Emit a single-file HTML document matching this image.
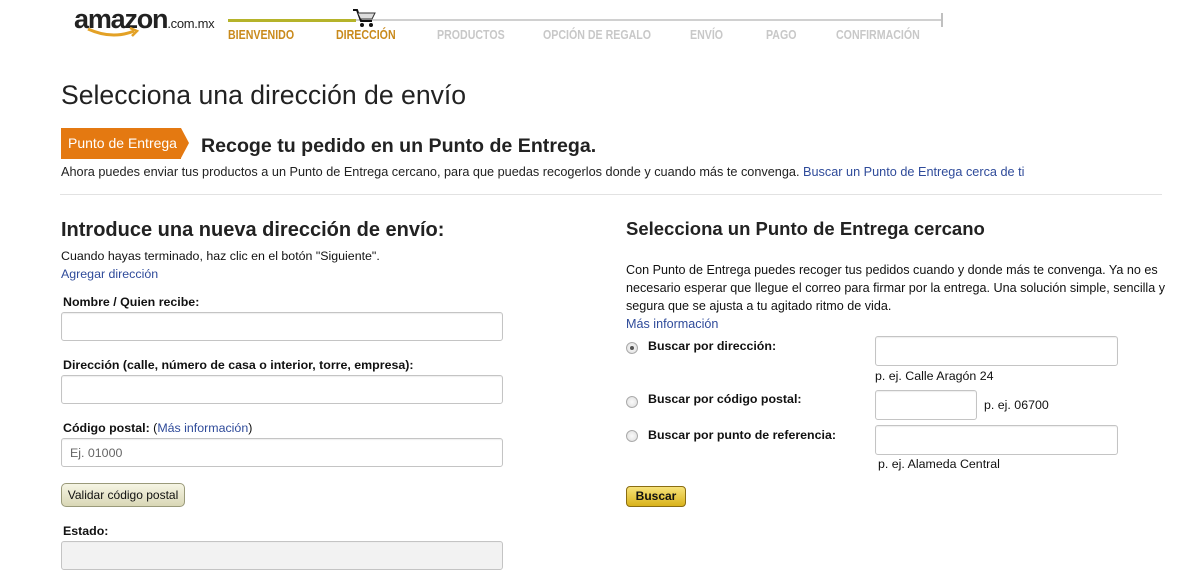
<!DOCTYPE html>
<html><head><meta charset="utf-8"><style>
*{margin:0;padding:0;box-sizing:border-box}
body{width:1200px;height:556px;overflow:hidden;background:#fff;font-family:"Liberation Sans",Arial,sans-serif;color:#111;position:relative;font-size:12.4px}
.a{position:absolute;white-space:nowrap}
.lnk{color:#2f4b9a}
.inp{position:absolute;border:1px solid #c4c4c4;border-radius:3px;background:#fff;box-shadow:inset 0 1px 1px #eee}
.b{font-weight:bold}
.step{position:absolute;top:28px;font-size:12.5px;font-weight:bold;color:#c8c8c8;transform:scaleX(0.85);transform-origin:left;font-family:"Liberation Sans Narrow","Liberation Sans",sans-serif}
.radio{position:absolute;width:12px;height:12px;border-radius:50%;border:1px solid #aaa;background:radial-gradient(#fafafa,#ddd)}
</style></head><body>
<div class="a" style="left:74px;top:4px;font-size:27px;font-weight:bold;letter-spacing:-1.2px;color:#222">amazon<span style="font-size:13px;font-weight:normal;letter-spacing:-0.3px">.com.mx</span></div>
<svg class="a" style="left:86px;top:26px" width="56" height="14"><path d="M2 3 Q26 14 48 5" stroke="#e3a126" stroke-width="3" fill="none"/><path d="M44 2 L51 5 L46 10" stroke="#e3a126" stroke-width="2.5" fill="none"/></svg>
<div class="a" style="left:228px;top:19px;width:128px;height:3px;background:#b5b32a"></div>
<div class="a" style="left:356px;top:19px;width:586px;height:2px;background:#d0d0d0"></div>
<div class="a" style="left:941px;top:13px;width:2px;height:14px;background:#c0c0c0"></div>
<svg class="a" style="left:352px;top:8px" width="26" height="20"><path d="M1 2 H5 L9 13 H20" stroke="#111" stroke-width="2" fill="none"/><path d="M6 5 H23 L20 11 H9" stroke="#333" stroke-width="1" fill="#ddd"/><circle cx="10" cy="17" r="2" fill="#111"/><circle cx="19" cy="17" r="2" fill="#111"/></svg>
<div class="step" style="left:228px;color:#c98a1c">BIENVENIDO</div>
<div class="step" style="left:336px;color:#c98a1c">DIRECCIÓN</div>
<div class="step" style="left:437px">PRODUCTOS</div>
<div class="step" style="left:543px">OPCIÓN DE REGALO</div>
<div class="step" style="left:690px">ENVÍO</div>
<div class="step" style="left:766px">PAGO</div>
<div class="step" style="left:836px">CONFIRMACIÓN</div>

<div class="a" style="left:61px;top:80px;font-size:26.6px;color:#222">Selecciona una dirección de envío</div>
<div class="a" style="left:61px;top:128px;width:120px;height:31px;background:#e47911;color:#fff;font-size:14px;line-height:31px;padding-left:7px">Punto de Entrega</div>
<div class="a" style="left:181px;top:128px;width:0;height:0;border-top:15.5px solid transparent;border-bottom:15.5px solid transparent;border-left:8px solid #e47911"></div>
<div class="a b" style="left:201px;top:135px;font-size:19.6px;color:#222">Recoge tu pedido en un Punto de Entrega.</div>
<div class="a" style="left:61px;top:165px;font-size:12.7px;color:#222">Ahora puedes enviar tus productos a un Punto de Entrega cercano, para que puedas recogerlos donde y cuando más te convenga. <span class="lnk">Buscar un Punto de Entrega cerca de ti</span></div>
<div class="a" style="left:60px;top:194px;width:1102px;height:1px;background:#e2e2e2"></div>

<div class="a b" style="left:61px;top:219px;font-size:20px;color:#222">Introduce una nueva dirección de envío:</div>
<div class="a" style="left:61px;top:249px">Cuando hayas terminado, haz clic en el botón "Siguiente".</div>
<div class="a lnk" style="left:61px;top:267px">Agregar dirección</div>
<div class="a b" style="left:63px;top:295px">Nombre / Quien recibe:</div>
<div class="inp" style="left:61px;top:312px;width:442px;height:29px"></div>
<div class="a b" style="left:63px;top:358px">Dirección (calle, número de casa o interior, torre, empresa):</div>
<div class="inp" style="left:61px;top:375px;width:442px;height:29px"></div>
<div class="a" style="left:63px;top:421px"><b>Código postal:</b> (<span class="lnk">Más información</span>)</div>
<div class="inp" style="left:61px;top:438px;width:442px;height:29px;color:#666;padding:7px 8px">Ej. 01000</div>
<div class="a" style="left:61px;top:483px;width:124px;height:24px;border:1px solid #9a9a7a;border-radius:5px;background:linear-gradient(#f6f5e4,#d9d7b6);font-size:12px;line-height:22px;text-align:center">Validar código postal</div>
<div class="a b" style="left:63px;top:524px">Estado:</div>
<div class="inp" style="left:61px;top:541px;width:442px;height:29px;background:#f2f2f2"></div>

<div class="a b" style="left:626px;top:218px;font-size:18.5px;color:#222">Selecciona un Punto de Entrega cercano</div>
<div class="a" style="left:626px;top:261px;line-height:18px;white-space:normal;width:545px;font-size:12.6px">Con Punto de Entrega puedes recoger tus pedidos cuando y donde más te convenga. Ya no es necesario esperar que llegue el correo para firmar por la entrega. Una solución simple, sencilla y segura que se ajusta a tu agitado ritmo de vida.<br><span class="lnk">Más información</span></div>
<div class="radio" style="left:626px;top:342px"><div style="position:absolute;left:3px;top:3px;width:4px;height:4px;border-radius:50%;background:#555"></div></div>
<div class="a b" style="left:648px;top:339px">Buscar por dirección:</div>
<div class="inp" style="left:875px;top:336px;width:243px;height:30px"></div>
<div class="a" style="left:875px;top:369px">p. ej. Calle Aragón 24</div>
<div class="radio" style="left:626px;top:396px"></div>
<div class="a b" style="left:648px;top:392px">Buscar por código postal:</div>
<div class="inp" style="left:875px;top:390px;width:102px;height:30px"></div>
<div class="a" style="left:984px;top:398px">p. ej. 06700</div>
<div class="radio" style="left:626px;top:430px"></div>
<div class="a b" style="left:648px;top:428px">Buscar por punto de referencia:</div>
<div class="inp" style="left:875px;top:425px;width:243px;height:30px"></div>
<div class="a" style="left:878px;top:457px">p. ej. Alameda Central</div>
<div class="a b" style="left:626px;top:486px;width:60px;height:21px;border:1px solid #8a6d12;border-radius:4px;background:linear-gradient(#f7e27a,#d9b21b);font-size:12px;line-height:19px;text-align:center">Buscar</div>
</body></html>
